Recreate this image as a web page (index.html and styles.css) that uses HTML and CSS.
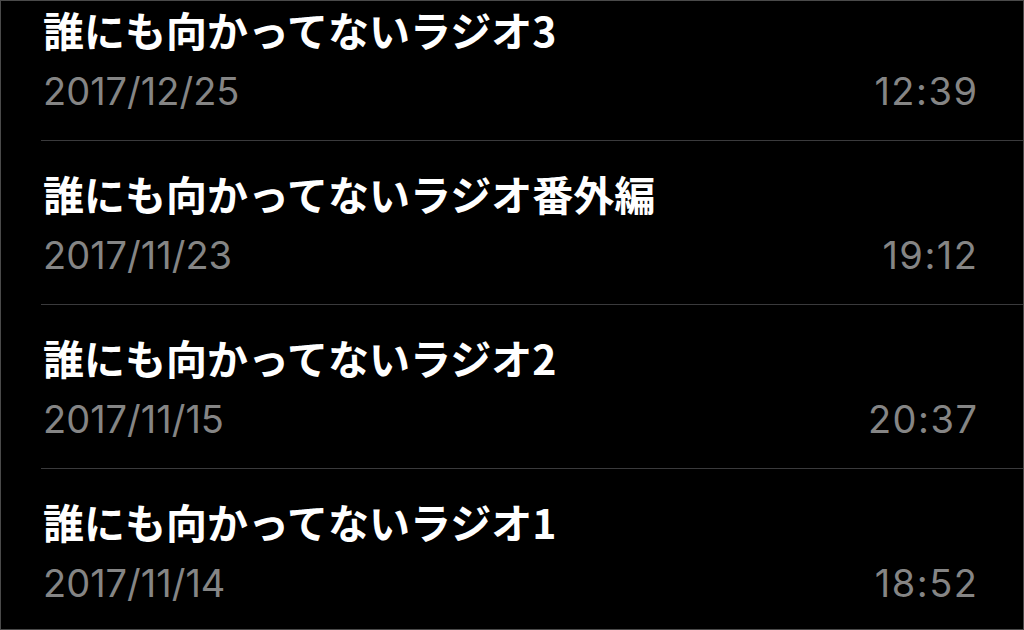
FILE: index.html
```html
<!DOCTYPE html>
<html lang="ja">
<head>
<meta charset="utf-8">
<link rel="stylesheet" href="styles.css">
</head>
<body>
<div class="frame">
  <ul class="list">
    <li class="row">
      <div class="title">誰にも向かってないラジオ3</div>
      <div class="meta"><span class="date">2017/12/25</span><span class="time">12:39</span></div>
    </li>
    <li class="row">
      <div class="title">誰にも向かってないラジオ番外編</div>
      <div class="meta"><span class="date">2017/11/23</span><span class="time">19:12</span></div>
    </li>
    <li class="row">
      <div class="title">誰にも向かってないラジオ2</div>
      <div class="meta"><span class="date">2017/11/15</span><span class="time">20:37</span></div>
    </li>
    <li class="row">
      <div class="title">誰にも向かってないラジオ1</div>
      <div class="meta"><span class="date">2017/11/14</span><span class="time">18:52</span></div>
    </li>
  </ul>
</div>
</body>
</html>
```

FILE: styles.css
```css
* { box-sizing: border-box; }
html, body { margin: 0; padding: 0; background: #000; }
.frame {
  width: 1024px;
  height: 630px;
  border: 1px solid #4a4a4a;
  overflow: hidden;
  background: #000;
}
.list {
  list-style: none;
  margin: -24px 0 0 0;
  padding: 0;
}
.row {
  margin-left: 40px;
  height: 164px;
  padding: 32px 46px 0 2px;
  border-bottom: 1px solid #3a3a3c;
}
.title {
  font-family: "Noto Sans CJK JP", sans-serif;
  font-weight: 700;
  font-size: 41px;
  line-height: 41px;
  color: #fff;
  white-space: nowrap;
}
.meta {
  margin-top: 22px;
  display: flex;
  justify-content: space-between;
  font-family: Inter, "Liberation Sans", sans-serif;
  font-size: 38px;
  line-height: 38px;
  color: #858585;
}
.time {
  letter-spacing: 1.5px;
  margin-right: -1.5px;
}
```
